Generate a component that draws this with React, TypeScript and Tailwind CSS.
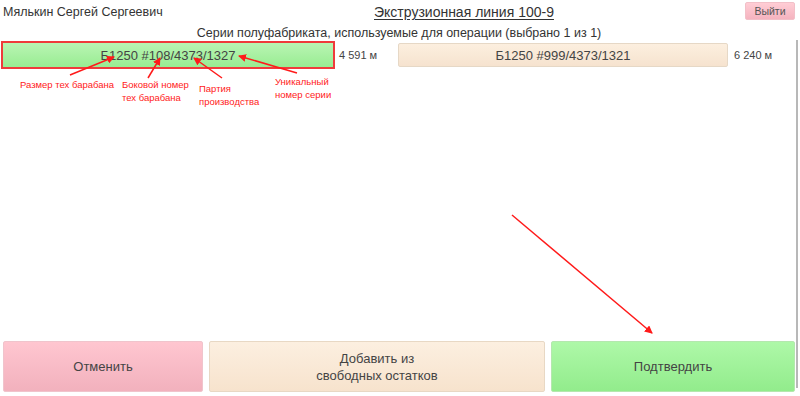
import React from 'react';

type Series = {
  code: string;
  length: string;
  selected: boolean;
};

const series: Series[] = [
  { code: "Б1250 #108/4373/1327", length: "4 591 м", selected: true },
  { code: "Б1250 #999/4373/1321", length: "6 240 м", selected: false },
];

export default function App() {
  return (
    <div className="relative h-[396px] w-[800px] overflow-hidden bg-white text-[#333] font-['Liberation_Sans',Arial,sans-serif]">
      <div className="flex h-full flex-col pl-[3px] pr-[5px]">
        {/* header */}
        <div className="flex h-[24px] items-center">
          <div className="w-[371px] text-[12.5px] leading-none">Мялькин Сергей Сергеевич</div>
          <div className="text-[14px] leading-none underline underline-offset-2">Экструзионная линия 100-9</div>
          <button className="ml-auto mt-[-2px] h-[18px] w-[50px] rounded-[2px] border border-[#f2c0c8] bg-gradient-to-b from-[#ffcdd5] to-[#f5b3bf] text-[10.5px] leading-none text-[#555]">
            Выйти
          </button>
        </div>

        <div className="mt-[1px] text-center text-[12.5px] leading-[16px]">
          Серии полуфабриката, используемые для операции (выбрано 1 из 1)
        </div>

        {/* series */}
        <div className="mt-[2px] grid grid-cols-[395px_1fr]">
          {series.map((s, i) => (
            <div key={i} className="flex items-center">
              <button
                className={`flex h-[24px] w-[330px] items-center justify-center text-[13px] leading-none text-[#444] ${
                  s.selected
                    ? 'rounded-none bg-gradient-to-b from-[#b9f5b3] to-[#98ec92] outline-2 outline-[#ef3b3b]'
                    : 'rounded-[2px] border border-[#e6d8c6] bg-gradient-to-b from-[#fcefdf] to-[#f6e3cf]'
                }`}
              >
                {s.code}
              </button>
              <span className="ml-[6px] text-[11px] text-[#444]">{s.length}</span>
            </div>
          ))}
        </div>

        <div className="flex-1" />

        {/* actions */}
        <div className="mb-[4px] flex h-[51px] gap-[6px]">
          <button className="w-[200px] rounded-[2px] border border-[#f0c4cc] bg-gradient-to-b from-[#ffc6d0] to-[#f2b1bd] text-[13px] text-[#444]">
            Отменить
          </button>
          <button className="w-[336px] rounded-[2px] border border-[#e8d8c4] bg-gradient-to-b from-[#fcefe0] to-[#f7e3cd] text-[13px] leading-[17px] text-[#444]">
            Добавить из
            <br />
            свободных остатков
          </button>
          <button className="flex-1 rounded-[2px] border border-[#b4e8ae] bg-gradient-to-b from-[#aef8a8] to-[#92ec8c] text-[13px] text-[#444]">
            Подтвердить
          </button>
        </div>
      </div>

      {/* scrollbar */}
      <div className="absolute right-[2px] top-[40px] h-[348px] w-[2px] bg-[#b8b8b8]" />

      {/* annotations */}
      <div className="absolute left-[20px] top-[78px] whitespace-nowrap text-[9.5px] leading-[13px] text-[#ff1a1a]">Размер тех барабана</div>
      <div className="absolute left-[122px] top-[78px] whitespace-nowrap text-[9.5px] leading-[13px] text-[#ff1a1a]">Боковой номер<br />тех барабана</div>
      <div className="absolute left-[199px] top-[82px] whitespace-nowrap text-[9.5px] leading-[13px] text-[#ff1a1a]">Партия<br />производства</div>
      <div className="absolute left-[275px] top-[75px] whitespace-nowrap text-[9.5px] leading-[13px] text-[#ff1a1a]">Уникальный<br />номер серии</div>

      <svg className="pointer-events-none absolute left-0 top-0" width="800" height="396">
        <defs>
          <marker id="ah" markerWidth="8" markerHeight="8" refX="7" refY="4" orient="auto" markerUnits="userSpaceOnUse">
            <path d="M0,0 L8,4 L0,8 Z" fill="#ff1a1a" />
          </marker>
        </defs>
        <g stroke="#ff1a1a" strokeWidth="1.5" fill="none" markerEnd="url(#ah)">
          <line x1="70" y1="75" x2="114" y2="57" />
          <line x1="148" y1="78" x2="160" y2="58" />
          <line x1="222" y1="78" x2="194" y2="58" />
          <line x1="297" y1="73" x2="239" y2="56" />
          <line x1="512" y1="215" x2="652" y2="333" />
        </g>
      </svg>
    </div>
  );
}
